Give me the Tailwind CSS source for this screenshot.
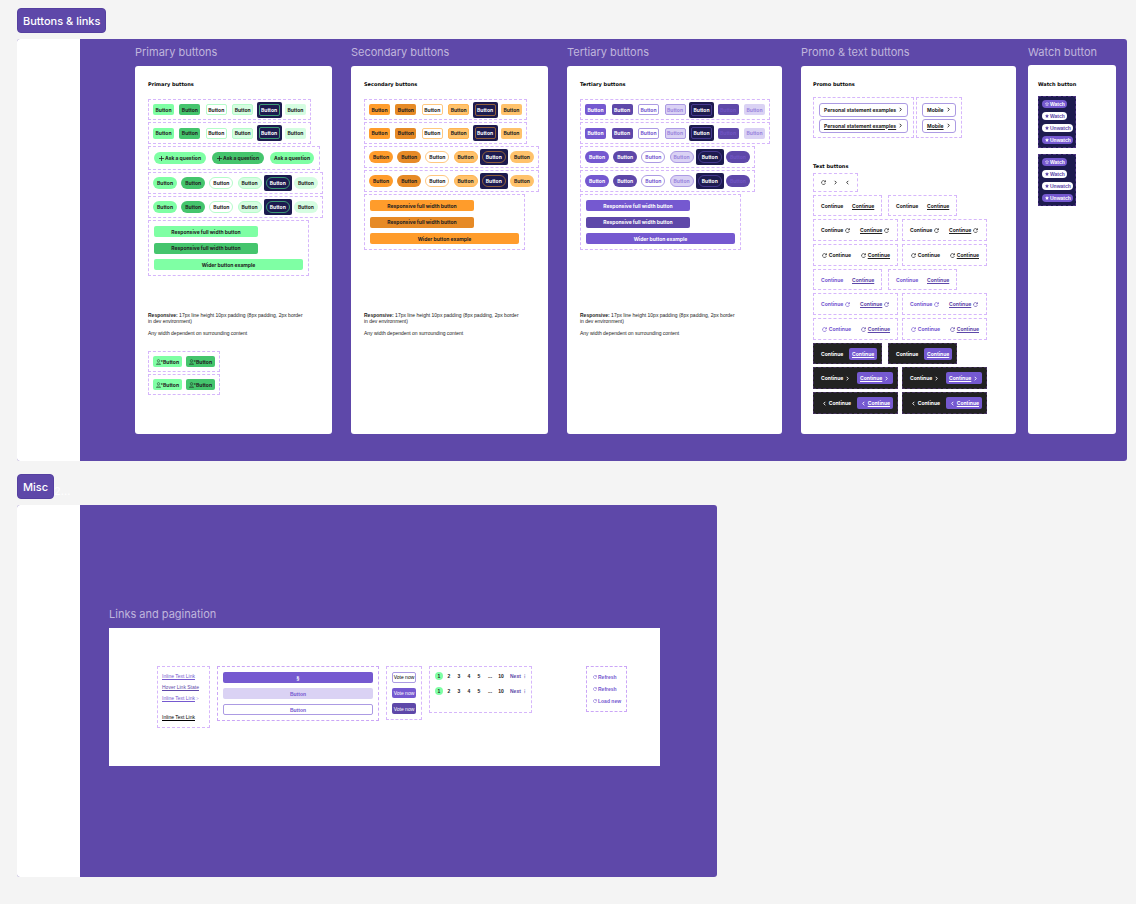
<!DOCTYPE html>
<html lang="en">
<head>
  <meta charset="UTF-8">
  <meta name="viewport" content="width=device-width, initial-scale=1.0">
  <title>Buttons &amp; links</title>
  <script src="https://cdn.jsdelivr.net/npm/@tailwindcss/browser@4"></script>
</head>
<body class="bg-[#f4f4f4] min-h-screen pt-2 pb-6 pl-[17px] pr-[9px] font-['Inter',sans-serif] text-[5px] leading-[6px] text-[#222]">

<!-- Icons -->
<svg class="hidden">
  <symbol id="refresh" viewBox="0 0 12 12"><path d="M10.5 7.5A4.7 4.7 0 1 1 9 2.5l1.6 1.6M10.8.8v3.6H7.2" fill="none" stroke="currentColor" stroke-width="1.6"/></symbol>
  <symbol id="right" viewBox="0 0 12 12"><path d="M4 2l4 4-4 4" fill="none" stroke="currentColor" stroke-width="2.2"/></symbol>
  <symbol id="left" viewBox="0 0 12 12"><path d="M8 2L4 6l4 4" fill="none" stroke="currentColor" stroke-width="2.2"/></symbol>
  <symbol id="plus" viewBox="0 0 12 12"><path d="M6 0v12M0 6h12" fill="none" stroke="currentColor" stroke-width="1.8"/></symbol>
  <symbol id="person" viewBox="0 0 14 12"><path d="M5 1.2a2.3 2.3 0 1 1 0 4.6 2.3 2.3 0 0 1 0-4.6zM1 11c0-4 8-4 8 0zM9.5 4h4M11.500 2v4" fill="none" stroke="currentColor" stroke-width="1"/></symbol>
  <symbol id="star" viewBox="0 0 12 12"><path d="M6 0l1.8 4 4.2.4-3.2 2.900 1 4.3L6 9.400l-3.800 2.200 1-4.3L0 4.400l4.200-.4z" fill="currentColor"/></symbol>
  <symbol id="star-line" viewBox="0 0 12 12"><path d="M6 1l1.500 3.300 3.500.4-2.600 2.400.7 3.600L6 8.900l-3.100 1.800.7-3.600L1 4.700l3.500-.4z" fill="none" stroke="currentColor" stroke-width="1.500"/></symbol>
</svg>

<!-- Buttons & links -->
<h1 class="w-fit h-[25px] px-[5px] flex items-center rounded-[4px] bg-[#5e48a9] border border-[#5540a0] text-white text-[11px] font-medium whitespace-nowrap">Buttons &amp; links</h1>

<main class="mt-[6px] flex rounded-[3px] overflow-hidden bg-[#5e48a9]">
  <div class="w-[63px] shrink-0 bg-white"></div>
  <div class="flex-1 flex gap-[19px] pl-[55px] pr-[11px] pt-[6px] pb-[27px] whitespace-nowrap">

    <!-- Primary -->
    <section class="flex-[197] min-w-0 flex flex-col">
      <h2 class="text-[11px] leading-[14px] text-[#c0b6dd]">Primary buttons</h2>
      <div class="mt-[7px] flex-1 bg-white rounded-[3px] pl-[13px] pt-[15px]">
        <h3 class="font-['DejaVu_Sans',sans-serif] font-bold text-black">Primary buttons</h3>
        <div id="primary" class="mt-[12px] flex flex-col gap-[2px] font-bold [&>div]:border [&>div]:border-dashed [&>div]:border-[#d6b6fb]"></div>
        <p class="mt-[36px] font-['Liberation_Sans',sans-serif]"><b>Responsive:</b> 17px line height 10px padding (8px padding, 2px border</p>
        <p class="font-['Liberation_Sans',sans-serif]">in dev environment)</p>
        <p class="mt-[6px] font-['Liberation_Sans',sans-serif]">Any width dependent on surrounding content</p>
        <div class="mt-[15px] flex flex-col gap-[2px] font-bold [&>div]:w-[72px] [&>div]:h-[21px] [&>div]:px-[4px] [&>div]:flex [&>div]:items-center [&>div]:justify-between [&>div]:border [&>div]:border-dashed [&>div]:border-[#d6b6fb] [&_button]:w-[29px] [&_button]:h-[11px] [&_button]:rounded-[2px] [&_button]:flex [&_button]:items-center [&_button]:justify-center">
          <div>
            <button class="bg-[#7fffa4]"><svg class="w-[7px] h-[6px]"><use href="#person"/></svg>Button</button>
            <button class="bg-[#45c56d]"><svg class="w-[7px] h-[6px]"><use href="#person"/></svg>Button</button>
          </div>
          <div>
            <button class="bg-[#7fffa4]"><svg class="w-[7px] h-[6px]"><use href="#person"/></svg>Button</button>
            <button class="bg-[#45c56d]"><svg class="w-[7px] h-[6px]"><use href="#person"/></svg>Button</button>
          </div>
        </div>
      </div>
    </section>

    <!-- Secondary -->
    <section class="flex-[197] min-w-0 flex flex-col">
      <h2 class="text-[11px] leading-[14px] text-[#c0b6dd]">Secondary buttons</h2>
      <div class="mt-[7px] flex-1 bg-white rounded-[3px] pl-[13px] pt-[15px]">
        <h3 class="font-['DejaVu_Sans',sans-serif] font-bold text-black">Secondary buttons</h3>
        <div id="secondary" class="mt-[12px] flex flex-col gap-[2px] font-bold [&>div]:border [&>div]:border-dashed [&>div]:border-[#d6b6fb]"></div>
        <p class="mt-[62px] font-['Liberation_Sans',sans-serif]"><b>Responsive:</b> 17px line height 10px padding (8px padding, 2px border</p>
        <p class="font-['Liberation_Sans',sans-serif]">in dev environment)</p>
        <p class="mt-[6px] font-['Liberation_Sans',sans-serif]">Any width dependent on surrounding content</p>
      </div>
    </section>

    <!-- Tertiary -->
    <section class="flex-[215] min-w-0 flex flex-col">
      <h2 class="text-[11px] leading-[14px] text-[#c0b6dd]">Tertiary buttons</h2>
      <div class="mt-[7px] flex-1 bg-white rounded-[3px] pl-[13px] pt-[15px]">
        <h3 class="font-['DejaVu_Sans',sans-serif] font-bold text-black">Tertiary buttons</h3>
        <div id="tertiary" class="mt-[12px] flex flex-col gap-[2px] font-bold text-white [&>div]:border [&>div]:border-dashed [&>div]:border-[#d6b6fb]"></div>
        <p class="mt-[62px] font-['Liberation_Sans',sans-serif]"><b>Responsive:</b> 17px line height 10px padding (8px padding, 2px border</p>
        <p class="font-['Liberation_Sans',sans-serif]">in dev environment)</p>
        <p class="mt-[6px] font-['Liberation_Sans',sans-serif]">Any width dependent on surrounding content</p>
      </div>
    </section>

    <div class="flex-[315] min-w-0 flex gap-[12px]">
      <!-- Promo & text -->
      <section class="flex-[215] min-w-0 flex flex-col">
        <h2 class="text-[11px] leading-[14px] text-[#c0b6dd]">Promo &amp; text buttons</h2>
        <div class="mt-[7px] flex-1 bg-white rounded-[3px] pl-[12px] pt-[15px] pb-[20px]">
          <h3 class="font-['DejaVu_Sans',sans-serif] font-bold text-black">Promo buttons</h3>
          <div class="mt-[10px] flex gap-[2px] font-bold [&>div]:h-[41px] [&>div]:px-[5px] [&>div]:flex [&>div]:flex-col [&>div]:justify-center [&>div]:gap-[2px] [&>div]:border [&>div]:border-dashed [&>div]:border-[#d6b6fb] [&_button]:h-[14px] [&_button]:px-[4px] [&_button]:flex [&_button]:items-center [&_button]:justify-between [&_button]:border [&_button]:border-[#ac9be3] [&_button]:rounded-[3px]">
            <div class="w-[101px]">
              <button>Personal statement examples <svg class="size-[5px]"><use href="#right"/></svg></button>
              <button><u>Personal statement examples</u> <svg class="size-[5px]"><use href="#right"/></svg></button>
            </div>
            <div class="w-[46px]">
              <button>Mobile <svg class="size-[5px]"><use href="#right"/></svg></button>
              <button><u>Mobile</u> <svg class="size-[5px]"><use href="#right"/></svg></button>
            </div>
          </div>

          <h3 class="mt-[25px] font-['DejaVu_Sans',sans-serif] font-bold text-black">Text buttons</h3>
          <div id="text-buttons" class="mt-[4px] flex flex-col gap-[3px] font-bold [&_button]:h-[12px] [&_button]:px-[3px] [&_button]:flex [&_button]:items-center [&_button]:rounded-[2px]">
            <div class="w-[45px] h-[19px] px-[4px] flex items-center justify-between border border-dashed border-[#d6b6fb]">
              <button aria-label="Refresh"><svg class="size-[5px]"><use href="#refresh"/></svg></button>
              <button aria-label="Next"><svg class="size-[5px]"><use href="#right"/></svg></button>
              <button aria-label="Previous"><svg class="size-[5px]"><use href="#left"/></svg></button>
            </div>
          </div>
        </div>
      </section>

      <!-- Watch -->
      <section class="flex-[88] min-w-0 flex flex-col">
        <h2 class="text-[11px] leading-[14px] text-[#c0b6dd]">Watch button</h2>
        <div class="mt-[6px] flex-1 bg-white rounded-[3px] pl-[10px] pt-[16px]">
          <h3 class="font-['DejaVu_Sans',sans-serif] font-bold text-black">Watch button</h3>
          <div class="mt-[9px] flex flex-col gap-[6px] font-['Liberation_Sans',sans-serif] font-bold [&>div]:w-[38px] [&>div]:h-[52px] [&>div]:px-[3px] [&>div]:flex [&>div]:flex-col [&>div]:items-start [&>div]:justify-center [&>div]:gap-[4px] [&>div]:bg-[#1d1b4f] [&>div]:border [&>div]:border-dashed [&>div]:border-[#4a3180] [&_button]:h-[8px] [&_button]:pl-[3px] [&_button]:pr-[2px] [&_button]:flex [&_button]:items-center [&_button]:gap-[1px] [&_button]:rounded-full">
            <div>
              <button class="bg-[#7559d0] text-white"><svg class="size-[4px]"><use href="#star-line"/></svg>Watch</button>
              <button class="bg-white text-[#5e48a9]"><svg class="size-[4px]"><use href="#star"/></svg>Watch</button>
              <button class="bg-white text-[#5e48a9]"><svg class="size-[4px]"><use href="#star"/></svg>Unwatch</button>
              <button class="bg-[#7559d0] text-white"><svg class="size-[4px]"><use href="#star"/></svg>Unwatch</button>
            </div>
            <div>
              <button class="bg-[#7559d0] text-white"><svg class="size-[4px]"><use href="#star-line"/></svg>Watch</button>
              <button class="bg-white text-[#5e48a9]"><svg class="size-[4px]"><use href="#star"/></svg>Watch</button>
              <button class="bg-white text-[#5e48a9]"><svg class="size-[4px]"><use href="#star"/></svg>Unwatch</button>
              <button class="bg-[#7559d0] text-white"><svg class="size-[4px]"><use href="#star"/></svg>Unwatch</button>
            </div>
          </div>
        </div>
      </section>
    </div>
  </div>
</main>

<!-- Misc -->
<div class="mt-[13px] flex items-center">
  <h1 class="h-[25px] px-[5px] flex items-center rounded-[4px] bg-[#5e48a9] border border-[#5540a0] text-white text-[11px] font-medium">Misc</h1>
  <span class="pt-[8px] text-[11px] text-white">2...</span>
</div>

<section class="mt-[6px] w-full max-w-[700px] flex rounded-[3px] overflow-hidden bg-[#5e48a9]">
  <div class="w-[63px] shrink-0 bg-white"></div>
  <div class="flex-1 pl-[29px] pr-[57px] pt-[102px] pb-[111px] whitespace-nowrap">
    <h2 class="text-[11px] leading-[14px] text-[#c0b6dd]">Links and pagination</h2>
    <div class="mt-[7px] bg-white h-[138px] pl-[48px] pr-[33px] pt-[38px] flex items-start font-['Liberation_Sans',sans-serif] font-bold text-[#5e48a9]">
      <div class="w-[53px] h-[62px] px-[4px] pt-[6px] flex flex-col items-start gap-[5px] border border-dashed border-[#d6b6fb] font-normal">
        <a href="#" class="underline text-[#7559d0]">Inline Text Link</a>
        <a href="#" class="underline">Hover Link State</a>
        <a href="#" class="flex items-center gap-[1px] text-[#7559d0]"><u>Inline Text Link</u><svg class="size-[3px]"><use href="#right"/></svg></a>
        <a href="#" class="mt-[8px] underline text-black">Inline Text Link</a>
      </div>
      <div class="ml-[7px] w-[162px] h-[55px] p-[5px] flex flex-col justify-between border border-dashed border-[#cba6f7] [&>button]:h-[11px] [&>button]:rounded-[2px]">
        <button class="bg-[#7559d0] text-white">§</button>
        <button class="bg-[#dad2f4] text-[#7559d0]">Button</button>
        <button class="bg-white border border-[#ac9be3] text-[#7559d0]">Button</button>
      </div>
      <div class="ml-[7px] w-[36px] h-[54px] p-[5px] flex flex-col gap-[5px] border border-dashed border-[#d6b6fb] font-normal text-white [&>button]:h-[11px] [&>button]:rounded-[2px]">
        <button class="border border-[#ac9be3] text-black">Vote now</button>
        <button class="bg-[#7559d0]">Vote now</button>
        <button class="bg-[#5e48a9]">Vote now</button>
      </div>
      <div class="ml-[7px] w-[103px] h-[47px] px-[5px] pt-[5px] flex flex-col gap-[7px] border border-dashed border-[#d6b6fb] text-[#222] [&>nav]:flex [&>nav]:items-center [&>nav]:h-[8px] [&_a]:w-[10px] [&_a]:text-center">
        <nav>
          <a href="#" class="rounded-full bg-[#7fffa4] leading-[8px] max-w-[8px] mr-[1px]">1</a><a href="#">2</a><a href="#">3</a><a href="#">4</a><a href="#">5</a><span class="w-[12px] text-center">...</span><a href="#">10</a>
          <a href="#" class="ml-[4px] flex items-center gap-[3px] text-[#5e48a9]">Next <span>⁝</span></a>
        </nav>
        <nav>
          <a href="#" class="rounded-full bg-[#7fffa4] leading-[8px] max-w-[8px] mr-[1px]">1</a><a href="#">2</a><a href="#">3</a><a href="#">4</a><a href="#">5</a><span class="w-[12px] text-center">...</span><a href="#">10</a>
          <a href="#" class="ml-[4px] flex items-center gap-[3px] text-[#5e48a9]">Next <span>⁝</span></a>
        </nav>
      </div>
      <div class="ml-auto w-[41px] h-[46px] px-[6px] flex flex-col items-start justify-center gap-[6px] border border-dashed border-[#cba6f7] text-[#7559d0] [&>button]:flex [&>button]:items-center [&>button]:gap-[1px]">
        <button><svg class="size-[4px]"><use href="#refresh"/></svg>Refresh</button>
        <button><svg class="size-[4px]"><use href="#refresh"/></svg>Refresh</button>
        <button><svg class="size-[4px]"><use href="#refresh"/></svg>Load new</button>
      </div>
    </div>
  </div>
</section>

<script>
  const square = 'w-[21px] h-[11px] rounded-[2px]';
  const pill = 'w-[24px] h-[12px] rounded-full';

  // states: default, hover, outline, focus, on dark, disabled...
  const themes = {
    primary: {
      states: ['bg-[#7fffa4]', 'bg-[#45c56d]', 'bg-white border border-[#b5fcca]', 'bg-[#d5fde1] border border-[#b5fcca]', 'dark', 'bg-[#d5fde1]'],
      dark: 'border-[#3f9b76]', width: 'w-[163px]', pillHeight: 'h-[22px]'
    },
    secondary: {
      states: ['bg-[#ff9c2b]', 'bg-[#e68a26]', 'bg-white border border-[#ffc880]', 'bg-[#ffc26b] border border-[#ffb451]', 'dark', 'bg-[#ffc26b]'],
      dark: 'border-[#8f5f3d]', width: 'w-[163px]', pillHeight: 'h-[22px]'
    },
    tertiary: {
      states: ['bg-[#7559d0]', 'bg-[#5e48a9]', 'bg-white border border-[#ac9be3] text-[#7559d0]', 'bg-[#dad2f4] border border-[#ac9be3] text-[#9b86dd]', 'dark', 'bg-[#5e48a9] text-[#7055c2]', 'bg-[#dad2f4] text-[#9b86dd]'],
      dark: 'border-[#473a90]', width: 'w-[190px]', pillHeight: 'h-[22px]'
    }
  };

  function stateRow(theme, box, shape, count) {
    const round = shape === pill;
    const items = theme.states.slice(0, count).map(state => state === 'dark'
      ? `<div class="-mx-[2px] ${round ? 'w-[28px]' : 'w-[25px]'} h-[16px] p-[2px] bg-[#1d1b4f] rounded-[2px] flex"><button class="w-full border ${theme.dark} ${round ? 'rounded-full' : 'rounded-[2px]'} text-white">Button</button></div>`
      : `<button class="${shape} ${state}">Button</button>`);
    return `<div class="${box} px-[4px] flex items-center justify-between">${items.join('')}</div>`;
  }

  const askRow = `<div class="w-[172px] h-[24px] px-[5px] flex items-center justify-between">
    <button class="w-[52px] h-[12px] rounded-full flex items-center justify-center gap-[1px] bg-[#7fffa4]"><svg class="size-[5px]"><use href="#plus"/></svg>Ask a question</button>
    <button class="w-[52px] h-[12px] rounded-full flex items-center justify-center gap-[1px] bg-[#45c56d]"><svg class="size-[5px]"><use href="#plus"/></svg>Ask a question</button>
    <button class="w-[44px] h-[12px] rounded-full bg-[#7fffa4]">Ask a question</button>
  </div>`;

  for (const [id, theme] of Object.entries(themes)) {
    const pills = stateRow(theme, `w-[175px] ${theme.pillHeight}`, pill, 6);
    document.getElementById(id).innerHTML =
      stateRow(theme, `${theme.width} h-[21px]`, square, 7) +
      stateRow(theme, `${theme.width} h-[22px]`, square, 7) +
      (id === 'primary' ? askRow : '') + pills + pills +
      `<div class="w-[161px] h-[56px] p-[5px] flex flex-col justify-between">
        <button class="w-[104px] h-[11px] rounded-[2px] ${theme.states[0]}">Responsive full width button</button>
        <button class="w-[104px] h-[11px] rounded-[2px] ${theme.states[1]}">Responsive full width button</button>
        <button class="w-[149px] h-[11px] rounded-[2px] ${theme.states[0]}">Wider button example</button>
      </div>`;
  }

  // Text buttons: each row shows the same pair twice
  const light = 'border-[#d6b6fb]';
  const dark = 'bg-[#222] border-[#43305c] text-white';
  const rows = [
    [light, '', '', ''],
    [light, '', 'after', 'refresh'],
    [light, '', 'before', 'refresh'],
    [light + ' text-[#7559d0]', 'text-[#5e48a9]', '', ''],
    [light + ' text-[#7559d0]', 'text-[#5e48a9]', 'after', 'refresh'],
    [light + ' text-[#7559d0]', 'text-[#5e48a9]', 'before', 'refresh'],
    [dark, 'bg-[#7559d0]', '', ''],
    [dark, 'bg-[#7559d0]', 'after', 'right'],
    [dark, 'bg-[#7559d0]', 'before', 'left']
  ];

  function textButton(label, cls, side, icon) {
    const svg = `<svg class="size-[5px]"><use href="#${icon}"/></svg>`;
    if (!side) return `<button class="w-[28px] ${cls}">${label}</button>`;
    if (side === 'after') return `<button class="w-[36px] gap-[2px] ${cls}">${label}${svg}</button>`;
    return `<button class="w-[36px] gap-[2px] justify-end ${cls}">${svg}${label}</button>`;
  }

  document.getElementById('text-buttons').insertAdjacentHTML('beforeend', rows.map(([box, hover, side, icon]) => {
    const size = side ? 'w-[85px] h-[22px]' : 'w-[69px] h-[21px]';
    const pair = `<div class="${size} px-[4px] flex items-center gap-[3px] border border-dashed ${box}">
      ${textButton('Continue', '', side, icon)}${textButton('<u>Continue</u>', hover, side, icon)}
    </div>`;
    return `<div class="flex ${side ? 'gap-[4px]' : 'gap-[6px]'}">${pair}${pair}</div>`;
  }).join(''));
</script>

</body>
</html>
